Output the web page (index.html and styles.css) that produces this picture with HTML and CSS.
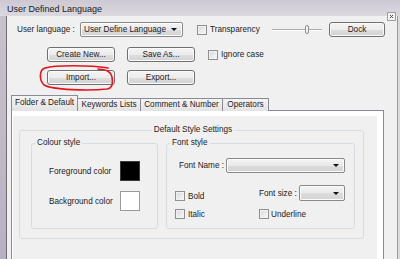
FILE: index.html
```html
<!DOCTYPE html>
<html lang="en">
<head>
<meta charset="UTF-8">
<meta name="viewport" content="width=device-width, initial-scale=1.0">
<title>User Defined Language</title>
<link rel="stylesheet" href="styles.css">
</head>
<body>

<div class="window">
    <div class="titlebar">
        <span class="title">User Defined Language</span>
        <span class="close-btn">
            <svg width="9" height="9" viewBox="0 0 9 9"><path d="M3 3 L6 6 M6 3 L3 6" stroke="#555" stroke-width="1"/></svg>
        </span>
    </div>

    <div class="frame">
        <div class="frame-left"></div>
        <div class="dialog">

            <div class="row row-lang">
                <span class="lang-lbl">User language :</span>
                <div class="combo lang-combo"><span>User Define Language</span><i class="caret"></i></div>
                <label class="check trans-check"><span class="box"></span>Transparency</label>
                <div class="slider"><span class="thumb"></span></div>
                <button class="btn dock-btn">Dock</button>
            </div>

            <div class="row row-actions row-create">
                <button class="btn">Create New...</button>
                <button class="btn">Save As...</button>
                <label class="check ignore-check"><span class="box"></span>Ignore case</label>
            </div>

            <div class="row row-actions row-import">
                <button class="btn">Import...</button>
                <button class="btn">Export...</button>
            </div>

            <!-- Tabs -->
            <div class="tabs">
                <div class="tab active tab-folder">Folder &amp; Default</div>
                <div class="tab tab-keywords">Keywords Lists</div>
                <div class="tab tab-comment">Comment &amp; Number</div>
                <div class="tab tab-operators">Operators</div>
            </div>

            <div class="panel">
                <div class="page">
                    <fieldset class="group group-main">
                        <legend class="legend-center">Default Style Settings</legend>
                        <div class="group-body">

                            <fieldset class="group group-colour">
                                <legend>Colour style</legend>
                                <div class="colour-grid">
                                    <span>Foreground color</span>
                                    <span class="swatch swatch-black"></span>
                                    <span>Background color</span>
                                    <span class="swatch swatch-white"></span>
                                </div>
                            </fieldset>

                            <fieldset class="group group-font">
                                <legend>Font style</legend>
                                <div class="font-body">
                                    <div class="font-name-row">
                                        <span class="font-name-lbl">Font Name :</span>
                                        <div class="combo font-name-combo"><span></span><i class="caret"></i></div>
                                    </div>
                                    <div class="font-grid">
                                        <label class="check bold-check"><span class="box"></span>Bold</label>
                                        <div class="font-size-cell">
                                            <span class="font-size-lbl">Font size :</span>
                                            <div class="combo font-size-combo"><span></span><i class="caret"></i></div>
                                        </div>
                                        <label class="check"><span class="box"></span>Italic</label>
                                        <label class="check underline-check"><span class="box"></span>Underline</label>
                                    </div>
                                </div>
                            </fieldset>

                        </div>
                    </fieldset>
                </div>
            </div>

        </div>
        <div class="frame-right"></div>
    </div>

    <!-- red marker drawn around the Import button -->
    <svg class="marker" width="400" height="259" viewBox="0 0 400 259">
        <path d="M108 68 C90 65, 55 65, 45 68 C39 70, 39 80, 44 85 C52 90, 90 91, 107 89 C113 88, 113 82, 112 77 C111 72, 108 70, 98 69"
              fill="none" stroke="#e3141c" stroke-width="1.6" stroke-linecap="round"/>
    </svg>
</div>

</body>
</html>
```

FILE: styles.css
```css
* {
    box-sizing: border-box;
}

body {
    margin: 0;
    font-family: "Liberation Sans", Arial, sans-serif;
    font-size: 8.2px;
    color: #1b1b1b;
    background-color: #f0f0f0;
}

.window {
    position: relative;
    width: 400px;
    height: 259px;
    overflow: hidden;
}

/* Title bar */
.titlebar {
    height: 16px;
    display: flex;
    justify-content: space-between;
    padding-left: 7px;
    background: linear-gradient(#cdc8d3, #dcd8df);
}

.title {
    font-size: 9px;
    line-height: 18px;
    color: #1a1a1a;
}

.close-btn {
    position: relative;
    z-index: 2;
    width: 9px;
    height: 9px;
    margin-top: 12px;
    margin-right: 4px;
    border: 1px solid #a0a0a0;
    background-color: #f3f3f3;
}

.close-btn svg {
    display: block;
    margin: -1px;
}

/* Window frame */
.frame {
    display: flex;
    height: 243px;
}

.frame-left {
    width: 6px;
    background: linear-gradient(#c8c2cc, #b8b0c2);
}

.frame-right {
    width: 2px;
    background-color: #dadada;
}

.dialog {
    flex: 1;
    overflow: hidden;
    background-color: #f0f0f0;
    border-left: 1px solid #6e6e6e;
    border-right: 1px solid #9a9a9a;
}

/* Rows on top */
.row {
    display: flex;
    align-items: center;
    height: 15px;
}

.row-lang {
    margin-top: 6px;
}

.row-create {
    margin-top: 10px;
}

.row-import {
    margin-top: 8px;
}

.lang-lbl {
    margin-left: 10px;
    width: 63px;
}

.combo {
    display: flex;
    align-items: center;
    height: 15px;
    padding-left: 3px;
    border: 1px solid #8a8a8a;
    border-radius: 2px;
    background: linear-gradient(#f4f4f4, #e9e9e9 50%, #dcdcdc 51%, #d3d3d3);
    box-shadow: inset 0 0 0 1px #fbfbfb;
}

.caret {
    margin-left: auto;
    margin-right: 5px;
    border-top: 3px solid #111;
    border-left: 3px solid transparent;
    border-right: 3px solid transparent;
}

.lang-combo {
    width: 103px;
}

.check {
    display: flex;
    align-items: center;
    gap: 3px;
}

.box {
    width: 10px;
    height: 10px;
    border: 1px solid #8e8f8f;
    background: linear-gradient(135deg, #d6d6d6, #fbfbfb);
    box-shadow: inset 0 0 0 1px #f2f2f2;
}

.trans-check {
    margin-left: 14px;
    width: 75px;
}

.slider {
    position: relative;
    width: 50px;
    height: 2px;
    border-top: 1px solid #ababab;
    border-bottom: 1px solid #ffffff;
}

.thumb {
    position: absolute;
    left: 33px;
    top: -5px;
    width: 4px;
    height: 9px;
    border: 1px solid #8b8b8b;
    border-radius: 2px;
    background-color: #f3f3f3;
}

.btn {
    height: 15px;
    padding: 0;
    font: inherit;
    color: #1b1b1b;
    line-height: 13px;
    border: 1px solid #707070;
    border-radius: 3px;
    background: linear-gradient(#f4f4f4, #ececec 50%, #dedede 51%, #d2d2d2);
    box-shadow: inset 0 0 0 1px #fbfbfb;
}

.dock-btn {
    margin-left: 7px;
    width: 56px;
}

.row-actions .btn {
    width: 68px;
}

.row-actions .btn:first-child {
    margin-left: 40px;
}

.row-actions .btn + .btn {
    margin-left: 12px;
}

.ignore-check {
    margin-left: 13px;
}

/* Tabs */
.tabs {
    display: flex;
    align-items: flex-end;
    height: 16px;
    margin-top: 10px;
    padding-left: 4px;
}

.tab {
    height: 13px;
    margin-left: -1px;
    line-height: 12px;
    text-align: center;
    white-space: nowrap;
    border: 1px solid #898c95;
    border-bottom: none;
    background: linear-gradient(#f4f4f4, #e3e3e3);
}

.tab.active {
    position: relative;
    z-index: 1;
    height: 16px;
    margin-left: 0;
    line-height: 14px;
    background-color: #ffffff;
}

.tab-folder { width: 67px; }
.tab-keywords { width: 64px; }
.tab-comment { width: 83px; }
.tab-operators { width: 47px; }

.panel {
    height: 160px;
    margin: -1px 13px 0 4px;
    padding: 5px 6px 0 1px;
    border: 1px solid #898c95;
    background-color: #ffffff;
}

.page {
    height: 154px;
    padding: 9px 0 0 6px;
    background-color: #f0f0f0;
}

/* Group boxes */
.group {
    margin: 0;
    padding: 0;
    border: 1px solid #d5dde3;
    border-radius: 3px;
    min-width: 0;
}

.group legend {
    margin-left: 3px;
    padding: 0 2px;
    line-height: 10px;
}

.group-main {
    width: 345px;
    padding: 3px 8px 9px 11px;
}

.group-main > .legend-center {
    margin: 0 auto;
}

.group-body {
    display: flex;
    gap: 8px;
}

.group-colour {
    width: 127px;
}

.group-font {
    width: 189px;
}

.colour-grid {
    display: grid;
    grid-template-columns: 71px 20px;
    row-gap: 10px;
    align-items: center;
    padding: 13px 0 16px 17px;
}

.swatch {
    width: 20px;
    height: 20px;
}

.swatch-black {
    background-color: #000;
    border: 1px solid #3a3a3a;
}

.swatch-white {
    background-color: #fff;
    border: 1px solid #9a9a9a;
}

.font-body {
    padding: 10px 0 9px 0;
}

.font-name-row {
    display: flex;
    align-items: center;
    padding-left: 12px;
}

.font-name-lbl {
    width: 47px;
}

.font-name-combo {
    width: 119px;
}

.font-grid {
    display: grid;
    grid-template-columns: 84px auto;
    row-gap: 8px;
    margin-top: 12px;
    padding-left: 8px;
}

.bold-check {
    align-self: start;
    margin-top: 6px;
}

.font-size-cell {
    display: flex;
    align-items: center;
}

.font-size-lbl {
    width: 40px;
}

.font-size-combo {
    width: 46px;
    height: 16px;
}

.underline-check {
    gap: 2px;
}

/* Red marker */
.marker {
    position: absolute;
    left: 0;
    top: 0;
    z-index: 3;
    pointer-events: none;
}
```
